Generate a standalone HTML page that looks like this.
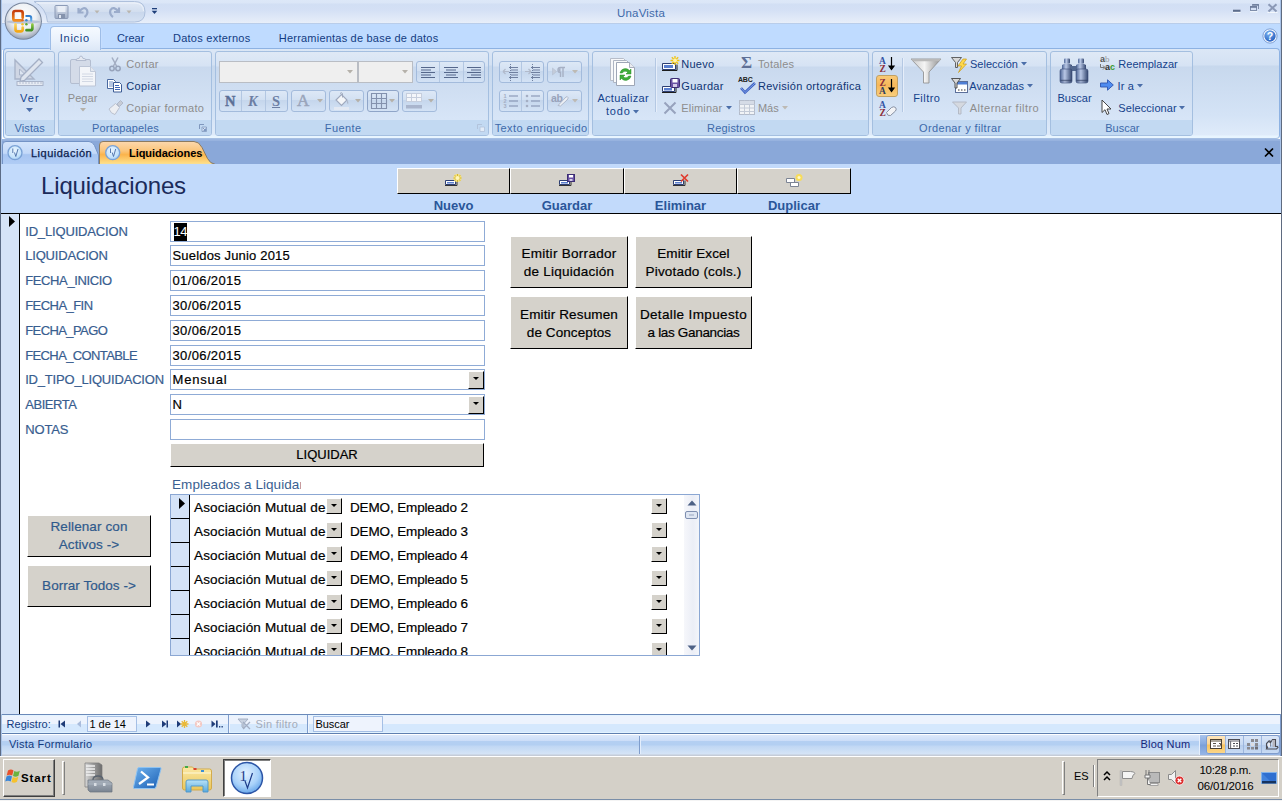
<!DOCTYPE html>
<html lang="es">
<head>
<meta charset="utf-8">
<title>UnaVista</title>
<style>
*{box-sizing:border-box;margin:0;padding:0}
html,body{width:1282px;height:801px;overflow:hidden;background:#fff}
body{position:relative;font-family:"Liberation Sans",sans-serif;font-size:11px;color:#15428b}
.abs,#app *{position:absolute}
#app{position:absolute;left:0;top:0;width:1282px;height:801px;overflow:hidden}
svg{overflow:visible}
/* ---------- title bar ---------- */
#titlebar{left:0;top:0;width:1282px;height:24px;background:linear-gradient(#dde8f8 0,#dbe6f7 3px,#d2dff4 4px,#d4e0f5 10px,#e6edf9 22px,#e9f0fa 23px,#b9cdea 23px,#b9cdea 24px)}
#title{left:0;width:1282px;top:7px;text-align:center;color:#3e6aaa;font-size:11.5px;letter-spacing:.2px}
#tabrow{left:0;top:24px;width:1282px;height:26px;background:#bfdbff}
.rtab{z-index:3;top:6px;font-size:11px;color:#133b82;white-space:nowrap;letter-spacing:.15px}
#tab-inicio{left:50px;top:26px;width:51px;height:24px;border:1px solid #9ebde7;border-bottom:0;border-radius:4px 4px 0 0;background:linear-gradient(#f6faff,#e9f1fc 60%,#dde8f7);z-index:2;box-shadow:0 0 2px #d9e8fb}
/* ---------- ribbon ---------- */
#ribbon{left:3px;top:48px;width:1277px;height:91px;border:1px solid #8db2e3;border-bottom-color:#a6bfe3;border-radius:4px;background:linear-gradient(#dbe7f6 0,#d3e1f3 16px,#c7d8ed 17px,#d4e3f6 66px,#dfebfa 86px,#e8f5ff 87px,#e8f5ff 89px)}
.grp{top:3px;height:85px;border:1px solid #a4bfe0;border-radius:3px;background:linear-gradient(#dfe9f6 0,#d6e3f4 14px,#c9d9ee 15px,#d7e5f7 67px)}
.grp .lab{left:0;right:0;bottom:0;height:15px;background:#c2d9f2;border-radius:0 0 2px 2px;text-align:center;font-size:11px;line-height:18px;overflow:visible;color:#3e6aaa;letter-spacing:.2px;white-space:nowrap}
.rt{font-size:11px;color:#15428b;white-space:nowrap;letter-spacing:.15px}
.dis{color:#8d8d8d}
.bg{border:1px solid #a3bbdc;border-radius:3px;background:linear-gradient(#dde8f6 0,#d2e0f2 45%,#c5d6ec 46%,#d3e2f5 100%)}
.bgd{width:1px;height:20px;background:#b3c7e2}
/* ---------- doc tabs ---------- */
#doctabs{left:0;top:139px;width:1282px;height:26px;background:linear-gradient(#9db8e2 0,#95b1de 2px,#8aa8d9 2.500px,#8aa8d9 24.500px,#7092c8 25px)}
/* ---------- form ---------- */
#fhead{left:1px;top:164px;width:1280px;height:49px;background:#c2dafb}
#fline{left:1px;top:213px;width:1280px;height:1px;background:#000}
#recsel{left:1px;top:214px;width:18px;height:500px;background:#d5e3f7}
#recline{left:19px;top:214px;width:1px;height:500px;background:#000}
.cal{font-family:"Liberation Sans",sans-serif}
.lbl{left:25px;font-size:13px;color:#385d8f;white-space:nowrap;-webkit-text-stroke:.2px #385d8f}
.tb{left:170px;width:315px;height:21px;border:1px solid #8fabd6;background:#fff;font-size:13px;color:#000;line-height:20px;padding-left:1.5px;white-space:nowrap;-webkit-text-stroke:.2px #000}
.btn{background:#d5d2cb;border:1px solid;border-color:#fff #000 #000 #fff;color:#000;font-size:13.2px;text-align:center;white-space:nowrap;-webkit-text-stroke:.2px}
.hl{top:198px;text-align:center;font-weight:bold;font-size:13px;color:#2a5699;white-space:nowrap}
.mb{font-size:13.5px;line-height:18px;white-space:nowrap}
.mb span{position:static!important}
.sel{position:static!important;background:#000;color:#fff;display:inline-block;height:18px;line-height:18px;vertical-align:top;margin-top:1px;padding:0;margin-left:1px;letter-spacing:-.6px;-webkit-text-stroke:0}
.cb{width:16px;height:16px;background:#d5d2cb;border:1px solid;border-color:#fff #000 #000 #fff}
.cb i{left:4px;top:5px;width:0;height:0;border:3px solid transparent;border-top:3px solid #000;border-bottom:0}
.sf{font-size:13.5px;color:#000;white-space:nowrap;line-height:18px;-webkit-text-stroke:.2px}
/* ---------- bottom ---------- */
#navbar{left:0;top:714px;width:1282px;height:20px;background:linear-gradient(#6b89b9 0,#6b89b9 1px,#e4f4ff 1px,#e4f4ff 2px,#edf3fd 2px,#edf3fd 10px,#d5e8fd 10px,#d5e8fd 18px,#e2f3ff 18px,#e2f3ff 19px,#5f7fb0 19px,#5f7fb0 20px)}
#statusbar{left:0;top:734px;width:1282px;height:22px;background:linear-gradient(#fff 0,#fff 1px,#dce8fa 1px,#cbddf8 7px,#b4cff2 7.500px,#b3cff2 11px,#c0d7f4 12px,#d5e4f6 20px,#c5ccd8 21px,#c5ccd8 22px)}
#taskbar{left:0;top:756px;width:1282px;height:45px;background:#d4d0c8;border-top:1px solid #fff}
.nt{font-size:11px;color:#123a7e;white-space:nowrap}
.gl{font-size:11px;color:#3e6aaa;white-space:nowrap;line-height:13px}
</style>
</head>
<body>
<div id="app">
<div id="titlebar"></div>
<div id="tabrow"></div>
<div class="abs" style="left:0;top:0;width:1px;height:756px;background:#5b6b85;z-index:5"></div><div class="abs" style="left:1px;top:0;width:1px;height:164px;background:#a9c3e8;z-index:5"></div><div class="abs" style="left:1px;top:714px;width:1px;height:42px;background:#a9c3e8;z-index:5"></div>
<div class="abs" style="left:1281px;top:0;width:1px;height:756px;background:#5f6b80;z-index:5"></div><div class="abs" style="left:1280px;top:0;width:1px;height:164px;background:#a9c3e8;z-index:5"></div><div class="abs" style="left:1280px;top:714px;width:1px;height:42px;background:#7f9dcc;z-index:5"></div>
<!-- QAT pill -->
<svg class="abs" style="left:0;top:0" width="170" height="26" viewBox="0 0 170 26"><defs><linearGradient id="qp" x1="0" y1="0" x2="0" y2="1"><stop offset="0" stop-color="#e2eaf6"/><stop offset=".5" stop-color="#d2deef"/><stop offset=".52" stop-color="#c9d7ec"/><stop offset="1" stop-color="#d6e2f3"/></linearGradient></defs>
<path d="M34 1.500H134.500Q145 1.500 145 11.700Q145 22 134.500 22H47.500Q46.500 8 34 1.500Z" fill="url(#qp)" stroke="#aec0dc" stroke-width="1"/>
<path d="M36 3H134Q143.500 3 143.500 11" fill="none" stroke="#f1f5fb" stroke-width="1" opacity=".8"/></svg>
<svg class="abs" style="left:0;top:0" width="170" height="50" viewBox="0 0 170 50">
  <defs>
    <radialGradient id="ob" cx="50%" cy="35%" r="65%"><stop offset="0" stop-color="#ffffff"/><stop offset=".55" stop-color="#eef1f5"/><stop offset=".8" stop-color="#c9cfd9"/><stop offset="1" stop-color="#9aa4b5"/></radialGradient>
    <linearGradient id="sv" x1="0" y1="0" x2="0" y2="1"><stop offset="0" stop-color="#d9e0ec"/><stop offset="1" stop-color="#9fadc6"/></linearGradient>
  </defs>
  <!-- cutout behind office button -->
  <path d="M26 1 Q44 3 47 22 L47 26 L26 26Z" fill="#dfe8f5" opacity=".0"/>
  <circle cx="23.3" cy="21.2" r="18.600" fill="#76849b"/>
  <circle cx="23.3" cy="21.2" r="17.600" fill="url(#ob)"/>
  <!-- office logo -->
  <ellipse cx="23.500" cy="21.800" rx="17" ry="2" fill="#aab6cb" opacity=".75"/>
  <defs>
    <linearGradient id="lo" x1="0" y1="0" x2="0" y2="1"><stop offset="0" stop-color="#c43c0c"/><stop offset="1" stop-color="#f28c1e"/></linearGradient>
    <linearGradient id="lb" x1="0" y1="0" x2="0" y2="1"><stop offset="0" stop-color="#2f7bcc"/><stop offset="1" stop-color="#69b2ea"/></linearGradient>
    <linearGradient id="ly" x1="0" y1="0" x2="0" y2="1"><stop offset="0" stop-color="#f9d561"/><stop offset="1" stop-color="#f4a714"/></linearGradient>
    <linearGradient id="lg" x1="0" y1="0" x2="0" y2="1"><stop offset="0" stop-color="#8cc63f"/><stop offset="1" stop-color="#3f8f24"/></linearGradient>
  </defs>
  <g fill="none" stroke-linejoin="round" stroke-linecap="round">
    <path d="M20.800 20.400H15.300Q13.300 20.400 13.300 18.400V13Q13.300 11 15.300 11H20.700Q22.700 11 22.700 13V17.800" stroke="url(#lo)" stroke-width="2.700"/>
    <path d="M26.300 16H29.300Q31.200 16 31.200 18V20.800" stroke="url(#lb)" stroke-width="2.100"/>
    <path d="M15.500 24.300V29.300Q15.500 31.300 17.500 31.300H20.700Q22.700 31.300 22.700 29.300V27.500" stroke="url(#ly)" stroke-width="2.700"/>
    <path d="M26.500 30.200H30.300Q32.400 30.200 32.400 28.200V24.500" stroke="url(#lg)" stroke-width="2.700"/>
  </g>
  <circle cx="22.500" cy="20.300" r="1.250" fill="#e0661e"/><circle cx="26.400" cy="20.300" r="1.250" fill="#3d86d2"/>
  <circle cx="22.500" cy="24.300" r="1.250" fill="#f5c033"/><circle cx="26.400" cy="24.300" r="1.250" fill="#5fa935"/>
  <path d="M15 13.500q0-1 1-1h4" stroke="#fff" stroke-width=".7" fill="none" opacity=".45"/>
  <!-- save icon -->
  <rect x="55" y="5.5" width="13" height="13" rx="1" fill="url(#sv)" stroke="#8c9bb7" stroke-width="1"/>
  <rect x="57.5" y="6" width="8" height="6" fill="#e9eef6"/>
  <rect x="58" y="14" width="7" height="4.5" fill="#8593ad"/><rect x="59" y="15" width="2" height="3" fill="#dfe6f1"/>
  <!-- undo -->
  <path d="M78.5 8 L78.5 12.5 L83.5 12.5 M79 12 Q84 5.5 87 10 Q88.5 14 84.5 17" fill="none" stroke="#9baccb" stroke-width="2.2"/>
  <path d="M94.5 10.5 L99.5 10.5 L97 13.5Z" fill="#b9b5ae"/>
  <!-- redo -->
  <path d="M119 7.5 L119 12 L114 12 M118.5 11.5 Q113.5 5.5 110.5 10 Q109 14 113 17" fill="none" stroke="#9baccb" stroke-width="2.2"/>
  <path d="M126.5 10.5 L131.500 10.5 L129 13.5Z" fill="#b9b5ae"/>
  <!-- customize -->
  <rect x="152" y="8" width="5" height="1.3" fill="#1f3f7a"/>
  <path d="M151.7 10.7 L157.3 10.7 L154.5 14Z" fill="#1f3f7a"/>
</svg>
<div id="title">UnaVista</div>
<!-- window controls -->
<svg class="abs" style="left:1225px;top:0" width="57" height="20" viewBox="0 0 57 20">
  <rect x="8" y="11.700" width="7.500" height="1.200" fill="#f4f8fd"/><rect x="8" y="9.700" width="7.500" height="2.100" fill="#5d6d8c"/>
  <path d="M27.500 4.500h6v4.500" fill="none" stroke="#7f8eab" stroke-width="1"/><path d="M27 5h7" stroke="#6c7b9a" stroke-width="1.400"/>
  <rect x="25.500" y="6.500" width="6" height="4" fill="none" stroke="#7f8eab" stroke-width="1"/><path d="M25 7h7" stroke="#6c7b9a" stroke-width="1.600"/>
  <path d="M25 11.700h7.500M42.500 12.500h10" stroke="#f4f8fd" stroke-width="1"/>
  <path d="M43.500 4.200L51.500 11.600M51.500 4.200L43.500 11.600" stroke="#8b99b6" stroke-width="2"/>
</svg>
<!-- ribbon tabs -->
<div id="tab-inicio"></div>
<div class="rtab" style="left:59.8px;top:32px;letter-spacing:0.72px">Inicio</div>
<div class="rtab" style="left:116.9px;top:32px;letter-spacing:-0.00px">Crear</div>
<div class="rtab" style="left:173.0px;top:32px;letter-spacing:0.25px">Datos externos</div>
<div class="rtab" style="left:278.8px;top:32px;letter-spacing:0.21px">Herramientas de base de datos</div>
<!-- help -->
<svg class="abs" style="left:1262px;top:28px" width="16" height="16" viewBox="0 0 16 16">
  <defs><radialGradient id="hp" cx="40%" cy="30%" r="75%"><stop offset="0" stop-color="#7db4f2"/><stop offset="1" stop-color="#1c55b8"/></radialGradient></defs>
  <circle cx="8" cy="8" r="6.300" fill="url(#hp)" stroke="#fff" stroke-width="1.200"/>
  <circle cx="8" cy="8" r="7.100" fill="none" stroke="#5c83c3" stroke-width=".7"/>
  <text x="8" y="12" text-anchor="middle" font-family="Liberation Sans, sans-serif" font-weight="bold" font-size="10.500" fill="#fff">?</text>
</svg>

<div id="ribbon"></div>
<!-- ===== Vistas ===== -->
<div class="grp" style="left:5px;top:51px;width:50px"><div class="lab"></div></div>
<svg class="abs" style="left:12px;top:56px" width="34" height="32" viewBox="0 0 34 32">
  <path d="M3 4 L3 23 L22 23Z" fill="#cfd6e4" stroke="#a9b4c9" stroke-width="1.4"/>
  <path d="M7.500 13 L7.500 19 L13.500 19Z" fill="#dde5f1" stroke="#a9b4c9" stroke-width="1"/>
  <path d="M9 21 L27 3 L30.500 6.500 L12.500 24.500 L8 25.500Z" fill="#dfe5ef" stroke="#a4afc5" stroke-width="1.3"/>
  <rect x="5" y="25.500" width="26" height="4" fill="#e6ebf3" stroke="#a9b4c9" stroke-width="1"/>
  <path d="M8 26v2M11 26v2M14 26v2M17 26v2M20 26v2M23 26v2M26 26v2M29 26v2" stroke="#a9b4c9" stroke-width=".8"/>
</svg>
<div class="rt" style="left:20.1px;top:92px;letter-spacing:0.99px">Ver</div>
<svg class="abs" style="left:26px;top:108px" width="7" height="4"><path d="M0 0h7L3.500 4z" fill="#4b6ea9"/></svg>
<!-- ===== Portapapeles ===== -->
<div class="grp" style="left:58px;top:51px;width:154px"><div class="lab"></div></div>
<svg class="abs" style="left:68px;top:55px" width="30" height="33" viewBox="0 0 30 33">
  <rect x="2.500" y="4.500" width="20" height="24" rx="1.500" fill="#d4dbe8" stroke="#b3bdd0"/>
  <path d="M8 5.500 q0-2 2-2 h1 q.5-2.500 2-2.500 q1.500 0 2 2.500 h1 q2 0 2 2z" fill="#e5e9f1" stroke="#aeb8cc" stroke-width=".9"/>
  <path d="M11.500 11.500h11l5 5v14.500h-16z" fill="#f3f5f9" stroke="#bcc5d6"/>
  <path d="M22.500 11.500v5h5" fill="#e3e8f0" stroke="#bcc5d6" stroke-width=".9"/>
  <path d="M14 19h11M14 21.500h11M14 24h11M14 26.500h11" stroke="#d2d8e4" stroke-width="1"/>
</svg>
<div class="rt dis" style="left:67.8px;top:92px;letter-spacing:0.06px">Pegar</div>
<svg class="abs" style="left:79.500px;top:108px" width="6" height="4"><path d="M0 0h6L3 3.500z" fill="#b5b1aa"/></svg>
<!-- cortar -->
<svg class="abs" style="left:108px;top:57px" width="14" height="15" viewBox="0 0 14 15">
  <path d="M4 0.500 L8.500 9 M10 0.500 L5.500 9" stroke="#a3adc2" stroke-width="1.500" fill="none"/>
  <circle cx="4" cy="11.500" r="2.200" fill="none" stroke="#97a3bb" stroke-width="1.500"/>
  <circle cx="10" cy="11.500" r="2.200" fill="none" stroke="#97a3bb" stroke-width="1.500"/>
</svg>
<div class="rt dis" style="left:126.3px;top:58px;letter-spacing:0.33px">Cortar</div>
<!-- copiar -->
<svg class="abs" style="left:106px;top:78px" width="17" height="15" viewBox="0 0 17 15">
  <path d="M1.500 1.500h6l2 2v7h-8z" fill="#fff" stroke="#4a69a0" stroke-width="1"/>
  <path d="M3 4h4M3 6h5M3 8h5" stroke="#6f8fc6" stroke-width="1"/>
  <path d="M7.500 4.500h6l2 2v7.500h-8z" fill="#fff" stroke="#3d5c95" stroke-width="1"/>
  <path d="M9 7.500h4M9 9.500h5M9 11.500h5" stroke="#3e66b6" stroke-width="1"/>
</svg>
<div class="rt" style="left:126.3px;top:80px;color:#0f3473;letter-spacing:0.38px">Copiar</div>
<!-- copiar formato -->
<svg class="abs" style="left:107px;top:100px" width="17" height="16" viewBox="0 0 17 16">
  <path d="M10 4 L13.500 0.500 L16 3 L12.500 6.500Z" fill="#c7ccd6" stroke="#a9b1c2" stroke-width=".8"/>
  <path d="M2 9 L8.500 3.500 L12.500 7.500 L8 14.500 Q4 14 2 9Z" fill="#eceef2" stroke="#b4bbc9" stroke-width=".9"/>
</svg>
<div class="rt dis" style="left:126.3px;top:102px;letter-spacing:0.38px">Copiar formato</div>
<svg class="abs" style="left:199px;top:124px" width="8" height="8" viewBox="0 0 8 8"><path d="M.500 5V.500H5" fill="none" stroke="#7f97bd"/><path d="M3 3h4.500v4.500H3z" fill="#d9e5f5" stroke="#7f97bd" stroke-width=".8"/><path d="M4 4l2.500 2.500M6.500 4.500v2h-2" stroke="#6483b4" stroke-width=".8" fill="none"/></svg>
<!-- ===== Fuente ===== -->
<div class="grp" style="left:215px;top:51px;width:274px"><div class="lab"></div></div>
<div class="abs" style="left:219px;top:61px;width:139px;height:22px;background:#efefef;border:1px solid #b9bdc4"></div>
<div class="abs" style="left:358px;top:61px;width:55px;height:22px;background:#efefef;border:1px solid #b9bdc4"></div>
<svg class="abs" style="left:347px;top:70px" width="6" height="4"><path d="M0 0h6L3 3.500z" fill="#b5b1aa"/></svg>
<svg class="abs" style="left:402px;top:70px" width="6" height="4"><path d="M0 0h6L3 3.500z" fill="#b5b1aa"/></svg>
<div class="bg" style="left:416px;top:61px;width:69px;height:22px"></div>
<div class="bgd" style="left:439px;top:62px"></div><div class="bgd" style="left:463px;top:62px"></div>
<svg class="abs" style="left:416px;top:61px" width="69" height="22" viewBox="0 0 69 22">
  <path d="M5 6.500h14M5 9h10M5 11.500h14M5 14h10M5 16.500h14" stroke="#55678b" stroke-width="1"/>
  <path d="M28 6.500h14M30 9h10M28 11.500h14M30 14h10M28 16.500h14" stroke="#55678b" stroke-width="1"/>
  <path d="M51 6.500h14M55 9h10M51 11.500h14M55 14h10M51 16.500h14" stroke="#55678b" stroke-width="1"/>
</svg>
<div class="bg" style="left:219px;top:90px;width:69px;height:22px"></div>
<div class="bgd" style="left:241px;top:91px"></div><div class="bgd" style="left:265px;top:91px"></div>
<div class="abs" style="left:225px;top:93px;font-family:'Liberation Serif',serif;font-weight:bold;font-size:14.500px;color:#5b6f96;-webkit-text-stroke:.4px #5b6f96">N</div>
<div class="abs" style="left:248px;top:93px;font-family:'Liberation Serif',serif;font-weight:bold;font-style:italic;font-size:14.500px;color:#6c7ea3">K</div>
<div class="abs" style="left:272px;top:93px;font-family:'Liberation Serif',serif;font-weight:bold;font-size:14.500px;color:#6c7ea3;text-decoration:underline">S</div>
<div class="bg" style="left:291px;top:90px;width:35px;height:22px"></div>
<div class="abs" style="left:297px;top:91px;font-family:'Liberation Serif',serif;font-size:17px;color:#9aa5bb;-webkit-text-stroke:.5px #9aa5bb">A</div>
<svg class="abs" style="left:317px;top:99px" width="6" height="4"><path d="M0 0h6L3 3.500z" fill="#b5b1aa"/></svg>
<div class="bg" style="left:329px;top:90px;width:35px;height:22px"></div>
<svg class="abs" style="left:333px;top:92px" width="18" height="18" viewBox="0 0 18 18">
  <path d="M3 8 L8.500 2.500 L14 8 L8.500 13.500Z" fill="#f4f6f9" stroke="#9ea8bd" stroke-width="1.100"/>
  <path d="M7 1.500 q1.500-1.500 2.500 0 v4" fill="none" stroke="#9ea8bd" stroke-width="1"/>
  <path d="M14 8 q2 2 1.200 4.500 q-1.500-1-1.200-4.500z" fill="#aab3c6"/>
  <rect x="1" y="15" width="15" height="3" fill="#e3e9f3"/>
</svg>
<svg class="abs" style="left:355px;top:99px" width="6" height="4"><path d="M0 0h6L3 3.500z" fill="#b5b1aa"/></svg>
<div class="bg" style="left:367px;top:90px;width:32px;height:22px;border-color:#8fa5c8"></div>
<svg class="abs" style="left:371px;top:93px" width="16" height="16" viewBox="0 0 16 16"><path d="M.500 .500h15v15h-15zM5.500 .500v15M10.500 .500v15M.500 5.500h15M.500 10.500h15" fill="none" stroke="#8391ad" stroke-width="1.100"/></svg>
<svg class="abs" style="left:389px;top:99px" width="6" height="4"><path d="M0 0h6L3 3.500z" fill="#b5b1aa"/></svg>
<div class="bg" style="left:402px;top:90px;width:35px;height:22px"></div>
<svg class="abs" style="left:406px;top:93px" width="17" height="16" viewBox="0 0 17 16">
  <rect x="0" y="0" width="16" height="9" fill="#c6cedd"/><path d="M1 1h4v3H1zM6 1h4v3H6zM11 1h4v3h-4zM1 5h4v3H1zM6 5h4v3H6zM11 5h4v3h-4z" fill="#f4f6fa"/>
  <rect x="0" y="12" width="16" height="3.500" fill="#a9b5cd"/>
</svg>
<svg class="abs" style="left:428px;top:99px" width="6" height="4"><path d="M0 0h6L3 3.500z" fill="#b5b1aa"/></svg>
<svg class="abs" style="left:477px;top:124px" width="8" height="8" viewBox="0 0 8 8"><path d="M.500 5V.500H5" fill="none" stroke="#b3c3db"/><path d="M3 3h4.500v4.500H3z" fill="#e3ecf8" stroke="#b3c3db" stroke-width=".8"/></svg>
<!-- ===== Texto enriquecido ===== -->
<div class="grp" style="left:492px;top:51px;width:97px"><div class="lab"></div></div>
<div class="bg" style="left:499px;top:61px;width:45px;height:22px"></div><div class="bgd" style="left:521px;top:62px"></div>
<svg class="abs" style="left:499px;top:61px" width="45" height="22" viewBox="0 0 45 22">
  <g stroke="#6f7f9f" stroke-width="1"><path d="M10 6.500h9M12 9h7M10 11.500h9M12 14h7M10 16.500h9M32 6.500h9M34 9h7M32 11.500h9M34 14h7M32 16.500h9"/><path d="M11.500 3v17M33.500 3v17" stroke-dasharray="1 1"/></g>
  <path d="M4 10.500h6M4 10.500l2.500-2.500M4 10.500l2.500 2.500" stroke="#b1bacb" stroke-width="1.200" fill="none"/>
  <path d="M26 10.500h6M32 10.500l-2.500-2.500M32 10.500l-2.500 2.500" stroke="#b1bacb" stroke-width="1.200" fill="none"/>
</svg>
<div class="bg" style="left:547px;top:61px;width:35px;height:22px"></div>
<svg class="abs" style="left:552px;top:66px" width="14" height="12" viewBox="0 0 14 12"><path d="M.500 2v7l4-3.500z" fill="#c3cbd9" stroke="#b4bdce" stroke-width=".6"/><path d="M13 1.500H8.500Q6 1.500 6 4t2.500 2.500V11M11 2v9" stroke="#a6b0c4" stroke-width="1.400" fill="none"/><path d="M8.500 2Q6.500 2 6.500 4t2 2z" fill="#a6b0c4"/></svg>
<svg class="abs" style="left:572px;top:70px" width="6" height="4"><path d="M0 0h6L3 3.500z" fill="#bdbab4"/></svg>
<div class="bg" style="left:499px;top:90px;width:45px;height:22px"></div><div class="bgd" style="left:521px;top:91px"></div>
<svg class="abs" style="left:499px;top:90px" width="45" height="22" viewBox="0 0 45 22">
  <path d="M10 6h9M10 11h9M10 16h9M32 6h9M32 11h9M32 16h9" stroke="#7e8cab" stroke-width="1.100"/>
  <g fill="#a4aec3"><circle cx="28" cy="6" r="1.300"/><circle cx="28" cy="11" r="1.300"/><circle cx="28" cy="16" r="1.300"/></g>
  <g font-family="Liberation Sans, sans-serif" font-size="5.500" font-weight="bold" fill="#a4aec3"><text x="4.500" y="8">1</text><text x="4.500" y="13">2</text><text x="4.500" y="18">3</text></g>
</svg>
<div class="bg" style="left:547px;top:90px;width:35px;height:22px"></div>
<div class="abs" style="left:551px;top:92px;font-size:10.500px;color:#97a2ba;font-weight:bold;letter-spacing:-.3px">ab</div>
<svg class="abs" style="left:556px;top:94px" width="13" height="13" viewBox="0 0 13 13"><path d="M2 11.500 L10 3 Q11.500 2 12 3.500 Q12.300 5 11 6 L4.500 12Z" fill="#eef1f6" stroke="#a9b3c6" stroke-width=".9"/></svg>
<svg class="abs" style="left:572px;top:99px" width="6" height="4"><path d="M0 0h6L3 3.500z" fill="#bdbab4"/></svg>
<!-- ===== Registros ===== -->
<div class="grp" style="left:592px;top:51px;width:277px"><div class="lab"></div></div>
<svg class="abs" style="left:608px;top:56px" width="30" height="32" viewBox="0 0 30 32">
  <path d="M2.500 2.500h13l4 4v18h-17z" fill="#f7f8fa" stroke="#b7bdc9"/>
  <path d="M5.500 4.500h13l4 4v18h-17z" fill="#f9fafb" stroke="#aeb5c3"/>
  <path d="M8.500 6.500h13l5 5v18h-18z" fill="#fff" stroke="#9ea6b6"/>
  <path d="M21.500 6.500v5h5" fill="#e9ecf1" stroke="#9ea6b6" stroke-width=".9"/>
  <path d="M12 17 a5.500 5.500 0 0 1 9.500-2.500 l1.500-1.500 v5 h-5 l1.700-1.700 a3.200 3.200 0 0 0-5.300 .700z" fill="#3fae3a" stroke="#2a8a2a" stroke-width=".5"/>
  <path d="M23 20 a5.500 5.500 0 0 1-9.500 2.500 l-1.500 1.500 v-5 h5 l-1.700 1.700 a3.200 3.200 0 0 0 5.300-.700z" fill="#3fae3a" stroke="#2a8a2a" stroke-width=".5"/>
</svg>
<div class="rt" style="left:597.4px;top:92px;letter-spacing:0.32px">Actualizar</div>
<div class="rt" style="left:606px;top:105px;letter-spacing:.8px">todo</div>
<svg class="abs" style="left:633px;top:110px" width="6" height="4"><path d="M0 0h6L3 3.500z" fill="#4b6ea9"/></svg>
<div class="abs" style="left:655px;top:58px;width:1px;height:54px;background:#b4c8e3"></div>
<div class="abs" style="left:656px;top:58px;width:1px;height:54px;background:#e6eefa"></div>
<!-- nuevo -->
<svg class="abs" style="left:661px;top:55px" width="19" height="17" viewBox="0 0 19 17">
  <path d="M1.500 8.500h13v6h-13z" fill="#fff" stroke="#2d3f73"/><rect x="3" y="10" width="9" height="3" fill="#5a7fd0"/><path d="M1 15.500h15v-6" fill="none" stroke="#1d1d1d" stroke-width="1"/>
  <g stroke="#f0c419" stroke-width="1.400"><path d="M14 1v9M9.500 5.500h9M10.800 2.300l6.400 6.400M17.200 2.300l-6.400 6.400"/></g><circle cx="14" cy="5.500" r="2" fill="#fff3a8"/>
</svg>
<div class="rt" style="left:681.3px;top:58px;color:#0f3473;letter-spacing:0.23px">Nuevo</div>
<!-- guardar -->
<svg class="abs" style="left:661px;top:78px" width="19" height="16" viewBox="0 0 19 16">
  <path d="M1.500 8.500h12v5h-12z" fill="#fff" stroke="#2d3f73"/><rect x="3" y="10" width="8" height="2.500" fill="#5a7fd0"/><path d="M1 14.500h14v-5" fill="none" stroke="#1d1d1d"/>
  <rect x="9.500" y=".500" width="9" height="9" rx="1" fill="#6a52a3" stroke="#3c2d73"/><rect x="11.500" y="1" width="5" height="3.500" fill="#fff"/><rect x="12" y="6" width="4" height="3" fill="#d4cde8"/>
</svg>
<div class="rt" style="left:681.3px;top:80px;color:#0f3473;letter-spacing:0.29px">Guardar</div>
<!-- eliminar -->
<svg class="abs" style="left:663px;top:101px" width="14" height="14" viewBox="0 0 14 14"><path d="M1.500 1.500l11 11M12.500 1.500l-11 11" stroke="#97a2bd" stroke-width="2"/></svg>
<div class="rt dis" style="left:681.3px;top:102px;letter-spacing:0.15px">Eliminar</div>
<svg class="abs" style="left:726px;top:106px" width="6" height="4"><path d="M0 0h6L3 3.500z" fill="#4b6ea9"/></svg>
<!-- totales -->
<div class="abs" style="left:741px;top:53px;font-size:17px;font-weight:bold;color:#5f7096;font-family:'Liberation Serif',serif">Σ</div>
<div class="rt dis" style="left:757.9px;top:58px;letter-spacing:0.23px">Totales</div>
<!-- revision -->
<div class="abs" style="left:738px;top:76px;font-size:7px;font-weight:bold;color:#222;letter-spacing:-.2px">ABC</div>
<svg class="abs" style="left:740px;top:82px" width="16" height="12" viewBox="0 0 16 12"><path d="M1 6l4 4.500L15 1" fill="none" stroke="#3b5fc0" stroke-width="2.600"/><path d="M1 6l4 4.500L15 1" fill="none" stroke="#7f9fe8" stroke-width="1"/></svg>
<div class="rt" style="left:757.9px;top:80px;color:#0f3473;letter-spacing:0.31px">Revisión ortográfica</div>
<!-- mas -->
<svg class="abs" style="left:739px;top:100px" width="17" height="16" viewBox="0 0 17 16"><rect x=".500" y=".500" width="15" height="14" fill="#f1f3f6" stroke="#b4bccb"/><path d="M.500 4.500h15M.500 8h15M.500 11.500h15M5.500 .500v14M10.500 .500v14" stroke="#c3cad7" stroke-width="1"/><rect x="1" y="1" width="14" height="3" fill="#d5dbe6"/></svg>
<div class="rt dis" style="left:757.9px;top:102px;letter-spacing:0.01px">Más</div>
<svg class="abs" style="left:782px;top:106px" width="6" height="4"><path d="M0 0h6L3 3.500z" fill="#bdbab4"/></svg>
<!-- ===== Ordenar y filtrar ===== -->
<div class="grp" style="left:872px;top:51px;width:175px"><div class="lab"></div></div>
<div class="abs" style="left:876px;top:75px;width:22px;height:22px;border:1px solid #c2a163;border-radius:3px;background:linear-gradient(#f9c977,#f7b85a 45%,#f9ce7c 100%)"></div>

<svg class="abs" style="left:876px;top:54px" width="24" height="64" viewBox="0 0 24 64">
  <g font-family="Liberation Serif, serif" font-weight="bold" font-size="9.500">
    <text x="3" y="10" fill="#3454a4">A</text><text x="3.500" y="18" fill="#8c2f3a">Z</text>
    <text x="3.500" y="32" fill="#8c2f3a">Z</text><text x="3" y="40" fill="#33415f">A</text>
    <text x="3" y="54" fill="#3454a4">A</text><text x="3.500" y="62" fill="#8c2f3a">Z</text>
  </g>
  <path d="M15.500 3v12M13 12l2.500 3.500L18 12z" stroke="#000" stroke-width="1.200" fill="#000"/>
  <path d="M15.500 25v12M13 34l2.500 3.500L18 34z" stroke="#000" stroke-width="1.200" fill="#000"/>
  <path d="M10.500 58.500l5-5q2.500-1.500 4 0t0 3.500l-5 4.500q-3 1-4-3z" fill="#f2f3f6" stroke="#7d8698" stroke-width=".9"/>
</svg>
<div class="abs" style="left:902px;top:58px;width:1px;height:54px;background:#b4c8e3"></div>
<div class="abs" style="left:903px;top:58px;width:1px;height:54px;background:#e6eefa"></div>
<svg class="abs" style="left:909px;top:57px" width="34" height="28" viewBox="0 0 34 28">
  <defs><linearGradient id="fn" x1="0" x2="1"><stop offset="0" stop-color="#c9c9c9"/><stop offset=".45" stop-color="#f4f4f4"/><stop offset="1" stop-color="#8f8f8f"/></linearGradient></defs>
  <path d="M2 2h30L20 15v11h-5.500V15z" fill="url(#fn)" stroke="#8a8a8a" stroke-width=".8"/>
  <path d="M2 2h30l-2 2.200H4z" fill="#b9b9b9"/>
</svg>
<div class="rt" style="left:913.2px;top:92px;letter-spacing:0.45px">Filtro</div>
<!-- seleccion -->
<svg class="abs" style="left:951px;top:56px" width="18" height="17" viewBox="0 0 18 17"><path d="M.500 1.500h10L6.500 6.500v5h-2v-5z" fill="#d9d9d9" stroke="#555" stroke-width=".9"/><path d="M12 3l-5 7h3.500l-3 6.500 8-8.500h-3.500l3.500-5z" fill="#ffd94a" stroke="#c79a1a" stroke-width=".7"/></svg>
<div class="rt" style="left:969.9px;top:58px;letter-spacing:0.04px">Selección</div>
<svg class="abs" style="left:1021px;top:62px" width="6" height="4"><path d="M0 0h6L3 3.500z" fill="#4b6ea9"/></svg>
<!-- avanzadas -->
<svg class="abs" style="left:951px;top:78px" width="18" height="17" viewBox="0 0 18 17"><rect x="4.500" y="3.500" width="12" height="11" fill="#fff" stroke="#5b6f9a"/><rect x="5" y="4" width="11" height="2.500" fill="#4f7fd6"/><path d="M7 12h1.500M10 12h1.500M13 12h1.500" stroke="#333" stroke-width="1.200"/><path d="M.500 .500h9L6 5v5H4V5z" fill="#d9d9d9" stroke="#444" stroke-width=".9"/></svg>
<div class="rt" style="left:969.3px;top:80px;letter-spacing:0.05px">Avanzadas</div>
<svg class="abs" style="left:1027px;top:84px" width="6" height="4"><path d="M0 0h6L3 3.500z" fill="#4b6ea9"/></svg>
<!-- alternar -->
<svg class="abs" style="left:952px;top:101px" width="15" height="14" viewBox="0 0 15 14"><path d="M.500 1h14L9 7v6H6.500V7z" fill="#d5d9e0" stroke="#b0b6c2" stroke-width=".9"/></svg>
<div class="rt dis" style="left:969.8px;top:102px;letter-spacing:0.47px">Alternar filtro</div>
<!-- ===== Buscar ===== -->
<div class="grp" style="left:1050px;top:51px;width:143px"><div class="lab"></div></div>
<svg class="abs" style="left:1059px;top:57px" width="30" height="28" viewBox="0 0 30 28">
  <defs><linearGradient id="bn" x1="0" x2="1"><stop offset="0" stop-color="#4d6596"/><stop offset=".4" stop-color="#b9c8e6"/><stop offset="1" stop-color="#33466f"/></linearGradient></defs>
  <rect x="5" y="1.500" width="6" height="5" rx="1" fill="url(#bn)"/><rect x="19" y="1.500" width="6" height="5" rx="1" fill="url(#bn)"/>
  <path d="M3 8 q5-3.500 10 0 v5h-10z" fill="url(#bn)"/><path d="M17 8 q5-3.500 10 0 v5h-10z" fill="url(#bn)"/>
  <rect x="12" y="9" width="6" height="5" fill="#53688f"/>
  <rect x="1" y="12" width="12" height="14" rx="2" fill="url(#bn)" stroke="#3a4c75" stroke-width=".6"/><rect x="17" y="12" width="12" height="14" rx="2" fill="url(#bn)" stroke="#3a4c75" stroke-width=".6"/>
  <path d="M1.500 23.500h11M17.500 23.500h11" stroke="#2c3b5e" stroke-width="1.500" opacity=".6"/>
</svg>
<div class="rt" style="left:1057.5px;top:92px;letter-spacing:-0.03px">Buscar</div>
<div class="abs" style="left:1100px;top:54px;font-size:9px;font-weight:bold;color:#555">a<span style="position:static;color:#999;font-family:'Liberation Serif',serif;font-weight:normal">b</span></div>
<div class="abs" style="left:1105px;top:62px;font-size:9px;font-weight:bold;color:#333">a<span style="position:static;color:#3b9a2f">c</span></div>
<svg class="abs" style="left:1100px;top:64px" width="6" height="6" viewBox="0 0 6 6"><path d="M.500 0v3.500h4M3 1.500l2 2-2 2" fill="none" stroke="#777" stroke-width="1"/></svg>
<div class="rt" style="left:1118.3px;top:58px;letter-spacing:0.01px">Reemplazar</div>
<svg class="abs" style="left:1100px;top:79px" width="14" height="12" viewBox="0 0 14 12"><path d="M.500 4h7V.800L13.300 6 7.500 11.200V8h-7z" fill="#4f8cf0" stroke="#2f55b0" stroke-width=".9"/></svg>
<div class="rt" style="left:1117.5px;top:80px;letter-spacing:0.17px">Ir a</div>
<svg class="abs" style="left:1137px;top:84px" width="6" height="4"><path d="M0 0h6L3 3.500z" fill="#4b6ea9"/></svg>
<svg class="abs" style="left:1101px;top:99px" width="11" height="17" viewBox="0 0 11 17"><path d="M1 1v12.500l3-2.800 2 4.800 2-.9-2-4.600h4z" fill="#fff" stroke="#444" stroke-width="1"/></svg>
<div class="rt" style="left:1118.3px;top:102px;letter-spacing:0.09px">Seleccionar</div>
<svg class="abs" style="left:1179px;top:106px" width="6" height="4"><path d="M0 0h6L3 3.500z" fill="#4b6ea9"/></svg>

<!-- group labels -->
<div class="gl" style="left:14.6px;top:122px;letter-spacing:0.09px">Vistas</div>
<div class="gl" style="left:92.1px;top:122px;letter-spacing:0.16px">Portapapeles</div>
<div class="gl" style="left:324.8px;top:122px;letter-spacing:0.41px">Fuente</div>
<div class="gl" style="left:494.7px;top:122px;letter-spacing:0.39px">Texto enriquecido</div>
<div class="gl" style="left:707.1px;top:122px;letter-spacing:0.18px">Registros</div>
<div class="gl" style="left:919.0px;top:122px;letter-spacing:0.36px">Ordenar y filtrar</div>
<div class="gl" style="left:1105.3px;top:122px;letter-spacing:-0.03px">Buscar</div>

<div id="doctabs"></div>
<svg class="abs" style="left:0;top:140px" width="230" height="25" viewBox="0 0 230 25">
  <defs>
    <linearGradient id="t1" x1="0" y1="0" x2="0" y2="1"><stop offset="0" stop-color="#d3e4fc"/><stop offset=".5" stop-color="#c3d9f9"/><stop offset=".56" stop-color="#a7c5f2"/><stop offset="1" stop-color="#b1cdf5"/></linearGradient>
    <linearGradient id="t2" x1="0" y1="0" x2="0" y2="1"><stop offset="0" stop-color="#fcd8ae"/><stop offset=".4" stop-color="#fbc57a"/><stop offset=".56" stop-color="#fbb44c"/><stop offset=".9" stop-color="#fedb83"/><stop offset="1" stop-color="#f3e0a6"/></linearGradient>
    <radialGradient id="ic" cx="45%" cy="35%" r="70%"><stop offset="0" stop-color="#eaf5ff"/><stop offset=".7" stop-color="#c3e2fb"/><stop offset="1" stop-color="#93bdea"/></radialGradient>
  </defs>
  <path d="M2.500 25V5q0-3.500 3.500-3.500h83q3.500 0 5.500 4l4 9.500v10z" fill="url(#t1)" stroke="#7393c6" stroke-width="1"/><path d="M2 24.500h97" stroke="#7393c6" stroke-width="1"/>
  <path d="M99.500 25V5q0-3.500 3.500-3.500h91q5 0 8 6l5.500 11q2.500 5 8 6.500z" fill="url(#t2)"/>
  <path d="M99.500 24.500V5q0-3.500 3.500-3.500h91q5 0 8 6l5.500 11q2.500 5 8 6" fill="none" stroke="#8d7b60" stroke-width="1"/>
  <circle cx="15" cy="12.700" r="7" fill="url(#ic)" stroke="#7aa2d6" stroke-width="1.300"/>
  <circle cx="112.700" cy="12.700" r="7" fill="url(#ic)" stroke="#7aa2d6" stroke-width="1.300"/>
  <g fill="none" stroke="#4a6da6" stroke-width=".9"><path d="M12.800 8.500v4.500M14.500 12.500l1.300 4 2.200-7.500"/><path d="M110.500 8.500v4.500M112.200 12.500l1.300 4 2.200-7.500"/></g>
</svg>
<div class="abs" style="left:31px;top:147px;font-size:11px;color:#0c1c4c;letter-spacing:.5px;white-space:nowrap;-webkit-text-stroke:.25px #0c1c4c">Liquidación</div>
<div class="abs" style="left:129px;top:147px;font-size:11px;font-weight:bold;color:#000;letter-spacing:-.05px;white-space:nowrap">Liquidaciones</div>
<svg class="abs" style="left:1264px;top:148px" width="10" height="9" viewBox="0 0 10 9"><path d="M1 .500l8 8M9 .500l-8 8" stroke="#000" stroke-width="1.700"/></svg>

<div id="fhead"></div><div id="fline"></div><div id="recsel"></div><div id="recline"></div>
<svg class="abs" style="left:9px;top:216px" width="7" height="12"><path d="M0 0v11l6-5.500z" fill="#000"/></svg>
<div class="abs" style="left:41px;top:172px;font-size:24px;color:#1b2b5a;letter-spacing:-.14px;white-space:nowrap">Liquidaciones</div>
<!-- header buttons -->
<div class="btn" style="left:397px;top:168px;width:113px;height:26px"></div>
<div class="btn" style="left:510px;top:168px;width:114px;height:26px"></div>
<div class="btn" style="left:624px;top:168px;width:113px;height:26px"></div>
<div class="btn" style="left:737px;top:168px;width:114px;height:26px"></div>
<svg class="abs" style="left:445px;top:174px" width="17" height="13" viewBox="0 0 17 13"><path d="M.500 6.500h10v4h-10z" fill="#fff" stroke="#2d3f73"/><rect x="2" y="8" width="7" height="1.500" fill="#5a7fd0"/><path d="M0 11.500h12v-5" fill="none" stroke="#333"/><circle cx="12.500" cy="4" r="4" fill="#f5e27a"/><g stroke="#c9a92a" stroke-width=".8"><path d="M12.500 0v8M8.500 4h8M9.700 1.200l5.600 5.600M15.300 1.200l-5.600 5.600"/></g><circle cx="12.500" cy="4" r="2" fill="#fff6b8"/></svg>
<svg class="abs" style="left:559px;top:174px" width="17" height="13" viewBox="0 0 17 13"><path d="M.500 6.500h10v4h-10z" fill="#fff" stroke="#2d3f73"/><rect x="2" y="8" width="7" height="1.500" fill="#5a7fd0"/><path d="M0 11.500h12v-5" fill="none" stroke="#333"/><rect x="8.500" y=".500" width="7" height="7" fill="#6a52a3" stroke="#3c2d73"/><rect x="10" y="1" width="4" height="2.500" fill="#fff"/><rect x="10.500" y="5" width="3" height="2" fill="#d4cde8"/></svg>
<svg class="abs" style="left:673px;top:174px" width="17" height="13" viewBox="0 0 17 13"><path d="M.500 6.500h10v4h-10z" fill="#fff" stroke="#2d3f73"/><rect x="2" y="8" width="7" height="1.500" fill="#5a7fd0"/><path d="M0 11.500h12v-5" fill="none" stroke="#333"/><path d="M8 .500l7 7M15 .500l-7 7" stroke="#e03a2c" stroke-width="1.700"/></svg>
<svg class="abs" style="left:786px;top:173px" width="18" height="15" viewBox="0 0 18 15"><path d="M.500 5.500h8v4h-8zM4.500 9.500h8v4h-8z" fill="#fff" stroke="#7c8494"/><circle cx="13" cy="4.500" r="3.500" fill="#f7dc5a"/><circle cx="13" cy="4.500" r="1.500" fill="#fff8c8"/></svg>
<div class="hl" style="left:397px;width:113px">Nuevo</div>
<div class="hl" style="left:510px;width:114px">Guardar</div>
<div class="hl" style="left:624px;width:113px">Eliminar</div>
<div class="hl" style="left:737px;width:114px">Duplicar</div>
<!-- labels -->
<div class="lbl" style="left:25.2px;top:224px;letter-spacing:-0.16px">ID_LIQUIDACION</div>
<div class="lbl" style="left:25.2px;top:248px;letter-spacing:-0.18px">LIQUIDACION</div>
<div class="lbl" style="left:25.2px;top:273px;letter-spacing:-0.37px">FECHA_INICIO</div>
<div class="lbl" style="left:25.2px;top:298px;letter-spacing:-0.55px">FECHA_FIN</div>
<div class="lbl" style="left:25.2px;top:323px;letter-spacing:-0.58px">FECHA_PAGO</div>
<div class="lbl" style="left:25.2px;top:348px;letter-spacing:-0.61px">FECHA_CONTABLE</div>
<div class="lbl" style="left:25.2px;top:372px;letter-spacing:-0.19px">ID_TIPO_LIQUIDACION</div>
<div class="lbl" style="left:25.2px;top:397px;letter-spacing:-0.44px">ABIERTA</div>
<div class="lbl" style="left:25.2px;top:422px;letter-spacing:-0.15px">NOTAS</div>
<!-- boxes -->
<div class="tb" style="top:221px"><span class="sel">14</span></div>
<div class="tb" style="top:245px;letter-spacing:0.18px">Sueldos Junio 2015</div>
<div class="tb" style="top:270px;letter-spacing:0.37px">01/06/2015</div>
<div class="tb" style="top:295px;letter-spacing:0.37px">30/06/2015</div>
<div class="tb" style="top:320px;letter-spacing:0.37px">30/06/2015</div>
<div class="tb" style="top:345px;letter-spacing:0.37px">30/06/2015</div>
<div class="tb" style="top:369px;letter-spacing:0.83px">Mensual</div>
<div class="tb" style="top:394px">N</div>
<div class="tb" style="top:419px"></div>
<div class="cb" style="left:468px;top:371px;height:18px"><i></i></div>
<div class="cb" style="left:468px;top:396px;height:18px"><i></i></div>
<div class="btn" style="left:170px;top:443px;width:314px;height:24px;line-height:22px;font-size:13px">LIQUIDAR</div>
<!-- right buttons -->
<div class="btn mb" style="left:510px;top:236px;width:118px;height:52px;padding-top:8px"><span style=";letter-spacing:0.29px">Emitir Borrador</span><br><span style=";letter-spacing:0.26px">de Liquidación</span></div>
<div class="btn mb" style="left:635px;top:236px;width:117px;height:52px;padding-top:8px"><span style=";letter-spacing:0.10px">Emitir Excel</span><br><span style=";letter-spacing:0.18px">Pivotado (cols.)</span></div>
<div class="btn mb" style="left:510px;top:296px;width:118px;height:53px;padding-top:9px"><span style=";letter-spacing:0.14px">Emitir Resumen</span><br><span style=";letter-spacing:0.08px">de Conceptos</span></div>
<div class="btn mb" style="left:635px;top:296px;width:117px;height:53px;padding-top:9px"><span style=";letter-spacing:0.37px">Detalle Impuesto</span><br><span style=";letter-spacing:-0.33px">a las Ganancias</span></div>
<!-- left buttons -->
<div class="btn mb" style="left:27px;top:515px;width:124px;height:42px;padding-top:2px;color:#2f5a8c"><span style=";letter-spacing:0.11px">Rellenar con</span><br><span style=";letter-spacing:.1px">Activos -&gt;</span></div>
<div class="btn mb" style="left:27px;top:565px;width:124px;height:42px;padding-top:11px;color:#2f5a8c"><span style=";letter-spacing:.04px">Borrar Todos -&gt;</span></div>
<!-- subform -->
<div class="abs" style="left:172px;top:477px;width:129px;height:16px;overflow:hidden;font-size:13.500px;color:#3a5f91;white-space:nowrap;letter-spacing:.07px">Empleados a Liquidar</div>
<div class="abs" style="left:170px;top:494px;width:530px;height:162px;border:1px solid #8ba7d3;background:#fff;overflow:hidden">
  <div class="abs" style="left:0;top:0;width:18px;height:160px;background:#d5e3f7"></div>
  <div class="abs" style="left:18px;top:0;width:1px;height:160px;background:#000"></div>
  <div class="abs" style="left:513px;top:0;width:15px;height:160px;background:linear-gradient(90deg,#f6f7fb,#ebeef6 60%,#f3f5fa)"></div>
  <svg class="abs" style="left:8px;top:3px" width="7" height="12"><path d="M0 0v11l6-5.500z" fill="#000"/></svg>
  <svg class="abs" style="left:513px;top:0" width="15" height="160" viewBox="0 0 15 160"><path d="M3.500 10.500h9L8 5.500z" fill="#4d6185"/><path d="M3.500 150.500h9L8 155.500z" fill="#4d6185"/><rect x="1.500" y="16.500" width="12" height="7" rx="1.500" fill="#dfe6f2" stroke="#7f8fb0"/><path d="M5 20h5" stroke="#9aa7c0"/></svg>
  <div class="sf" style="left:23px;top:4px;letter-spacing:0.17px">Asociación Mutual de</div><div class="cb" style="left:155px;top:3px"><i></i></div><div class="sf" style="left:179px;top:4px;letter-spacing:-0.14px">DEMO, Empleado 2</div><div class="cb" style="left:480px;top:3px"><i></i></div>
<div class="abs" style="left:0;top:23px;width:18px;height:1px;background:#000"></div>
<div class="sf" style="left:23px;top:28px;letter-spacing:0.17px">Asociación Mutual de</div><div class="cb" style="left:155px;top:27px"><i></i></div><div class="sf" style="left:179px;top:28px;letter-spacing:-0.14px">DEMO, Empleado 3</div><div class="cb" style="left:480px;top:27px"><i></i></div>
<div class="abs" style="left:0;top:47px;width:18px;height:1px;background:#000"></div>
<div class="sf" style="left:23px;top:52px;letter-spacing:0.17px">Asociación Mutual de</div><div class="cb" style="left:155px;top:51px"><i></i></div><div class="sf" style="left:179px;top:52px;letter-spacing:-0.14px">DEMO, Empleado 4</div><div class="cb" style="left:480px;top:51px"><i></i></div>
<div class="abs" style="left:0;top:71px;width:18px;height:1px;background:#000"></div>
<div class="sf" style="left:23px;top:76px;letter-spacing:0.17px">Asociación Mutual de</div><div class="cb" style="left:155px;top:75px"><i></i></div><div class="sf" style="left:179px;top:76px;letter-spacing:-0.14px">DEMO, Empleado 5</div><div class="cb" style="left:480px;top:75px"><i></i></div>
<div class="abs" style="left:0;top:95px;width:18px;height:1px;background:#000"></div>
<div class="sf" style="left:23px;top:100px;letter-spacing:0.17px">Asociación Mutual de</div><div class="cb" style="left:155px;top:99px"><i></i></div><div class="sf" style="left:179px;top:100px;letter-spacing:-0.14px">DEMO, Empleado 6</div><div class="cb" style="left:480px;top:99px"><i></i></div>
<div class="abs" style="left:0;top:119px;width:18px;height:1px;background:#000"></div>
<div class="sf" style="left:23px;top:124px;letter-spacing:0.17px">Asociación Mutual de</div><div class="cb" style="left:155px;top:123px"><i></i></div><div class="sf" style="left:179px;top:124px;letter-spacing:-0.14px">DEMO, Empleado 7</div><div class="cb" style="left:480px;top:123px"><i></i></div>
<div class="abs" style="left:0;top:143px;width:18px;height:1px;background:#000"></div>
<div class="sf" style="left:23px;top:148px;letter-spacing:0.17px">Asociación Mutual de</div><div class="cb" style="left:155px;top:147px"><i></i></div><div class="sf" style="left:179px;top:148px;letter-spacing:-0.14px">DEMO, Empleado 8</div><div class="cb" style="left:480px;top:147px"><i></i></div>

</div>

<div id="navbar"></div>
<div class="nt" style="left:6.500px;top:718px;letter-spacing:.04px">Registro:</div>
<svg class="abs" style="left:56px;top:717px" width="175" height="14" viewBox="0 0 175 14">
  <g fill="#1f3c78"><rect x="2.500" y="3.500" width="1.500" height="7"/><path d="M9 3.500v7L4.500 7z"/>
  <path d="M90 3.500v7L94.500 7z"/><path d="M106 3.500v7l4.500-3.500z"/><rect x="110.500" y="3.500" width="1.500" height="7"/>
  <path d="M121 3.500v7l4-3.500z"/><path d="M155.500 3.500v7l4-3.500z"/><rect x="160" y="3.500" width="1.700" height="7"/><rect x="163" y="9" width="1.300" height="1.500"/><rect x="165.500" y="9" width="1.300" height="1.500"/></g>
  <path d="M25 3.500v7L21 7z" fill="#a9bcdc"/>
  <g stroke="#e9b93a" stroke-width="1.300"><path d="M128.500 3v8M124.500 7h8M125.700 4.200l5.600 5.600M131.300 4.200l-5.600 5.600"/></g>
  <circle cx="142.500" cy="7" r="3.600" fill="#f3c9c4"/><path d="M140.800 5.300l3.400 3.400M144.200 5.300l-3.400 3.400" stroke="#fff" stroke-width="1.200"/>
</svg>
<div class="abs" style="left:87px;top:716px;width:50px;height:16px;border:1px solid #a5bfe5;background:#eef3fd"></div>
<div class="nt" style="left:89.500px;top:718px;color:#000;letter-spacing:-.05px">1 de 14</div>
<div class="abs" style="left:228px;top:715px;width:1px;height:18px;background:#7f9dcc"></div>
<div class="abs" style="left:229px;top:715px;width:1px;height:18px;background:#eef4fd"></div>
<svg class="abs" style="left:237px;top:717px" width="15" height="14" viewBox="0 0 15 14"><path d="M1 2h10L7 6.500v5l-2-1.500V6.500z" fill="#c9d2e0" stroke="#9fabc0" stroke-width=".9"/><path d="M6 5l7 7M13 5l-7 7" stroke="#a3aec3" stroke-width="1.300"/></svg>
<div class="nt" style="left:255.500px;top:718px;color:#a4acba;letter-spacing:.3px">Sin filtro</div>
<div class="abs" style="left:307px;top:715px;width:1px;height:18px;background:#7f9dcc"></div>
<div class="abs" style="left:308px;top:715px;width:1px;height:18px;background:#eef4fd"></div>
<div class="abs" style="left:313px;top:716px;width:70px;height:16px;border:1px solid #a5bfe5;background:#eef3fd"></div>
<div class="nt" style="left:315.500px;top:718px;color:#000;letter-spacing:-.07px">Buscar</div>
<div id="statusbar"></div>
<div class="nt" style="left:9px;top:738px;letter-spacing:.21px">Vista Formulario</div>
<div class="abs" style="left:639px;top:736px;width:1px;height:18px;background:#7f9dcc"></div>
<div class="abs" style="left:640px;top:736px;width:1px;height:18px;background:#e4eefc"></div>
<div class="nt" style="left:1140.500px;top:738px;color:#15267a;letter-spacing:.19px">Bloq Num</div>
<div class="abs" style="left:1200px;top:735px;width:80px;height:20px;background:linear-gradient(#a9c4ec,#86a9df 45%,#7b9fd8 50%,#97b6e6)"></div>
<div class="abs" style="left:1199px;top:735px;width:1px;height:20px;background:#e4eefc"></div>
<div class="abs" style="left:1206px;top:735px;width:74px;height:19px;border:1px solid #7f9ccc;border-radius:3px;background:linear-gradient(#dbe7f8,#c7d9f2 50%,#b4cbeb 51%,#c9dbf4)"></div>
<div class="abs" style="left:1207px;top:736px;width:18px;height:17px;background:linear-gradient(#fde6bd,#fbd699 48%,#f9c35c 52%,#fbd689);border-radius:2px 0 0 2px"></div>
<div class="abs" style="left:1225px;top:736px;width:1px;height:17px;background:#9db6dd"></div><div class="abs" style="left:1243px;top:736px;width:1px;height:17px;background:#9db6dd"></div><div class="abs" style="left:1261px;top:736px;width:1px;height:17px;background:#9db6dd"></div>
<svg class="abs" style="left:1206px;top:735px" width="74" height="18" viewBox="0 0 74 18">
  <g fill="#fff" stroke="#4a4032" stroke-width="1"><rect x="4.500" y="4.500" width="11" height="9"/></g><rect x="22.500" y="4.500" width="11" height="9" fill="#fff" stroke="#4d4d55"/>
  <path d="M5 6h10" stroke="#8a8170" stroke-width="1.400"/><path d="M7 8.500h3M7 11h3M11 11h3.500M13 8.500h1.500v2" stroke="#4a4032" stroke-width=".9" fill="none"/>
  <path d="M23 6h10" stroke="#8d8d95" stroke-width="1.400"/><path d="M24.500 6v7" stroke="#77777f" stroke-width="1.300"/><path d="M27 8.500h2M30 8.500h2M27 11h2M30 11h2" stroke="#4d4d55" stroke-width="1.100"/>
  <g fill="#8a8a90"><rect x="45" y="4" width="3" height="3"/><rect x="49" y="4" width="3" height="3"/><rect x="41" y="8" width="3" height="3"/><rect x="45" y="8" width="3" height="3" fill="#dcdce0"/><rect x="49" y="8" width="3" height="3"/><rect x="41" y="12" width="3" height="2.500"/><rect x="45" y="12" width="3" height="2.500"/><rect x="49" y="11.500" width="3" height="3" fill="#6e6e76"/></g>
  <path d="M60.500 13.500v-5l3-3M64 5.500v6M66.500 4.500h3v7h2l.500 1-1.500 1.500h-10z" fill="none" stroke="#4d4d55" stroke-width="1.100"/><rect x="62" y="8" width="2" height="4" fill="#e9e9ee"/><rect x="66.500" y="5" width="2.500" height="7" fill="#b5b5bd"/>
</svg>
<div id="taskbar"></div>
<div class="abs" style="left:0;top:799px;width:1282px;height:1px;background:#7a8ea8"></div>
<div class="abs" style="left:0;top:800px;width:1282px;height:1px;background:#f4f4f4"></div>
<!-- start -->
<div class="abs" style="left:3px;top:759px;width:52px;height:38px;background:#d4d0c8;border:1px solid;border-color:#fff #404040 #404040 #fff;box-shadow:inset -1px -1px 0 #808080"></div>
<svg class="abs" style="left:5px;top:768px" width="16" height="16" viewBox="0 0 16 16">
  <path d="M3 2.500q3-1.800 5.500 0l-1.300 5q-2.700-1.700-5.500 0z" fill="#e8512c"/><path d="M9.300 3q2.700 1.500 5.500-.300l-1.300 5q-2.800 1.700-5.500.300z" fill="#6cb33f"/>
  <path d="M1.500 8.500q3-1.800 5.500 0l-1.300 5q-2.700-1.700-5.500 0z" fill="#3a86d8"/><path d="M7.800 9q2.700 1.500 5.500-.300l-1.300 5q-2.800 1.700-5.500.300z" fill="#f6c22d"/>
</svg>
<div class="abs" style="left:21px;top:771.500px;font-size:11.500px;font-weight:bold;color:#000;letter-spacing:.9px">Start</div>
<div class="abs" style="left:62px;top:761px;width:3px;height:34px;border:1px solid;border-color:#fff #808080 #808080 #fff"></div>
<!-- server manager -->
<svg class="abs" style="left:83px;top:761px" width="30" height="33" viewBox="0 0 30 33">
  <defs><linearGradient id="sm" x1="0" x2="1"><stop offset="0" stop-color="#d9d9d9"/><stop offset=".5" stop-color="#9c9c9c"/><stop offset="1" stop-color="#6d6d6d"/></linearGradient><linearGradient id="tb" x1="0" y1="0" x2="0" y2="1"><stop offset="0" stop-color="#a9b2bd"/><stop offset="1" stop-color="#7a8491"/></linearGradient></defs>
  <path d="M2 2h14l3 2v22H2z" fill="url(#sm)" stroke="#7a7a7a" stroke-width=".7"/><path d="M3 5h9M3 8h9M3 11h9M3 14h9" stroke="#efefef" stroke-width="1.300"/>
  <path d="M10 19q0-4 5-4t5 4" fill="none" stroke="#59636f" stroke-width="1.400"/>
  <path d="M5 19h20l4 3v9H7l-2-2z" fill="url(#tb)" stroke="#6a7480" stroke-width=".7"/><path d="M5 23h24" stroke="#aab4c0" stroke-width="1"/><rect x="11" y="22" width="2.500" height="3" fill="#d8dde3"/><rect x="20" y="22" width="2.500" height="3" fill="#d8dde3"/>
</svg>
<!-- powershell -->
<svg class="abs" style="left:133px;top:766px" width="29" height="24" viewBox="0 0 29 24">
  <defs><linearGradient id="ps" x1="0" y1="0" x2="1" y2="1"><stop offset="0" stop-color="#6fb2ee"/><stop offset="1" stop-color="#1a5fb4"/></linearGradient></defs>
  <path d="M6 1.500h21q1.500 0 1 1.500l-5 18q-.500 1.500-2 1.500H1.500q-1.500 0-1-1.500l4-18q.300-1.500 1.500-1.500z" fill="url(#ps)" stroke="#8fc3f1" stroke-width="1"/>
  <path d="M8 5.500l7 6-9 6.500" fill="none" stroke="#fff" stroke-width="2.300"/><path d="M14 18.500h7" stroke="#fff" stroke-width="2"/>
</svg>
<!-- explorer -->
<svg class="abs" style="left:181px;top:764px" width="32" height="30" viewBox="0 0 32 30">
  <defs><linearGradient id="fo" x1="0" y1="0" x2="0" y2="1"><stop offset="0" stop-color="#fbe9a6"/><stop offset="1" stop-color="#eac65a"/></linearGradient><linearGradient id="fb" x1="0" y1="0" x2="0" y2="1"><stop offset="0" stop-color="#b8e2f8"/><stop offset="1" stop-color="#58a9dd"/></linearGradient></defs>
  <path d="M1.500 5q0-2 2-2h8l2 2h15q2 0 2 2v17q0 2-2 2h-25q-2 0-2-2z" fill="url(#fo)" stroke="#d0a640" stroke-width=".9"/>
  <rect x="4" y="2" width="3" height="2" fill="#3faa4a"/><rect x="12.500" y="4" width="3" height="2" fill="#d9432f"/><rect x="20" y="6" width="3" height="2" fill="#3b8fd6"/>
  <path d="M2 9h28" stroke="#fdf5cf" stroke-width="1.200"/>
  <path d="M5 18q0-2 2-2h18q2 0 2 2v10h-5v-6h-12v6H5z" fill="url(#fb)" stroke="#4c95c9" stroke-width=".9"/>
</svg>
<!-- active app -->
<div class="abs" style="left:223px;top:759px;width:48px;height:38px;background:#fff;border:1px solid;border-color:#404040 #fff #fff #404040;box-shadow:inset 1px 1px 0 #808080"></div>
<svg class="abs" style="left:230px;top:761px" width="34" height="34" viewBox="0 0 34 34">
  <defs><radialGradient id="ap" cx="45%" cy="35%" r="70%"><stop offset="0" stop-color="#e2f1ff"/><stop offset=".6" stop-color="#a9d2fa"/><stop offset="1" stop-color="#5c9fe6"/></radialGradient></defs>
  <circle cx="17" cy="17" r="15.500" fill="url(#ap)" stroke="#2c55a6" stroke-width="1.500"/>
  <path d="M15 20l2.500 7 5-15" fill="none" stroke="#1d3c8a" stroke-width="1.200"/>
  <text x="9.500" y="19.500" font-family="Liberation Serif, serif" font-size="15" fill="#1d3c8a">1</text>
</svg>
<!-- tray -->
<div class="abs" style="left:1062px;top:761px;width:3px;height:34px;border:1px solid;border-color:#fff #808080 #808080 #fff"></div>
<div class="abs" style="left:1074px;top:770px;font-size:11px;color:#000;letter-spacing:0">ES</div>
<div class="abs" style="left:1093px;top:765px;width:2px;height:22px;border-left:1px solid #808080;border-right:1px solid #fff"></div>
<div class="abs" style="left:1097px;top:759px;width:182px;height:38px;border:1px solid;border-color:#808080 #fff #fff #808080"></div>
<svg class="abs" style="left:1103px;top:770px" width="8" height="12" viewBox="0 0 8 12"><path d="M1 5l3-3 3 3M1 10l3-3 3 3" fill="none" stroke="#000" stroke-width="1.500"/></svg>
<svg class="abs" style="left:1119px;top:769px" width="18" height="18" viewBox="0 0 18 18"><path d="M2 1.500v15" stroke="#8c8c8c" stroke-width="2.200"/><path d="M2 1.500v15" stroke="#f2f2f2" stroke-width="1"/><path d="M3.500 2.500h8q4 0 4.500 2-2.500 1-3 5h-9.500z" fill="#f4f4f4" stroke="#8c8c8c" stroke-width="1"/></svg>
<svg class="abs" style="left:1143px;top:769px" width="18" height="18" viewBox="0 0 18 18"><rect x="5.500" y="3.500" width="11" height="10" fill="#b9b9b9" stroke="#8b8b8b"/><rect x="7" y="14.500" width="8" height="2" fill="#f1f1f1" stroke="#8b8b8b" stroke-width=".7"/><path d="M3 1v5M6 1v5M2 6h5v3H2zM4.500 9v6.500h3" fill="#f5f5f5" stroke="#777" stroke-width="1"/></svg>
<svg class="abs" style="left:1167px;top:768px" width="19" height="19" viewBox="0 0 19 19"><path d="M1.500 6.500h3l4-4v13l-4-4h-3z" fill="#f2f2f2" stroke="#8a8a8a" stroke-width="1"/><circle cx="12.500" cy="12.500" r="4.500" fill="#dc2f2f" stroke="#fff" stroke-width=".8"/><path d="M10.700 10.700l3.600 3.600M14.300 10.700l-3.600 3.600" stroke="#fff" stroke-width="1.400"/></svg>
<div class="abs" style="left:1199.500px;top:764px;font-size:11.500px;color:#000;letter-spacing:-.3px;white-space:nowrap">10:28 p.m.</div>
<div class="abs" style="left:1197.500px;top:780px;font-size:11.500px;color:#000;letter-spacing:-.15px;white-space:nowrap">06/01/2016</div>
<svg class="abs" style="left:1261px;top:772px" width="16" height="13" viewBox="0 0 16 13"><rect x=".500" y=".500" width="15" height="11" fill="#2f6fd0" stroke="#7fb0ea"/><path d="M1 9h14v2.500H1z" fill="#16335f"/><path d="M1 1l8 8H1z" fill="#4f8fe6" opacity=".6"/></svg>

</div>
</body>
</html>
